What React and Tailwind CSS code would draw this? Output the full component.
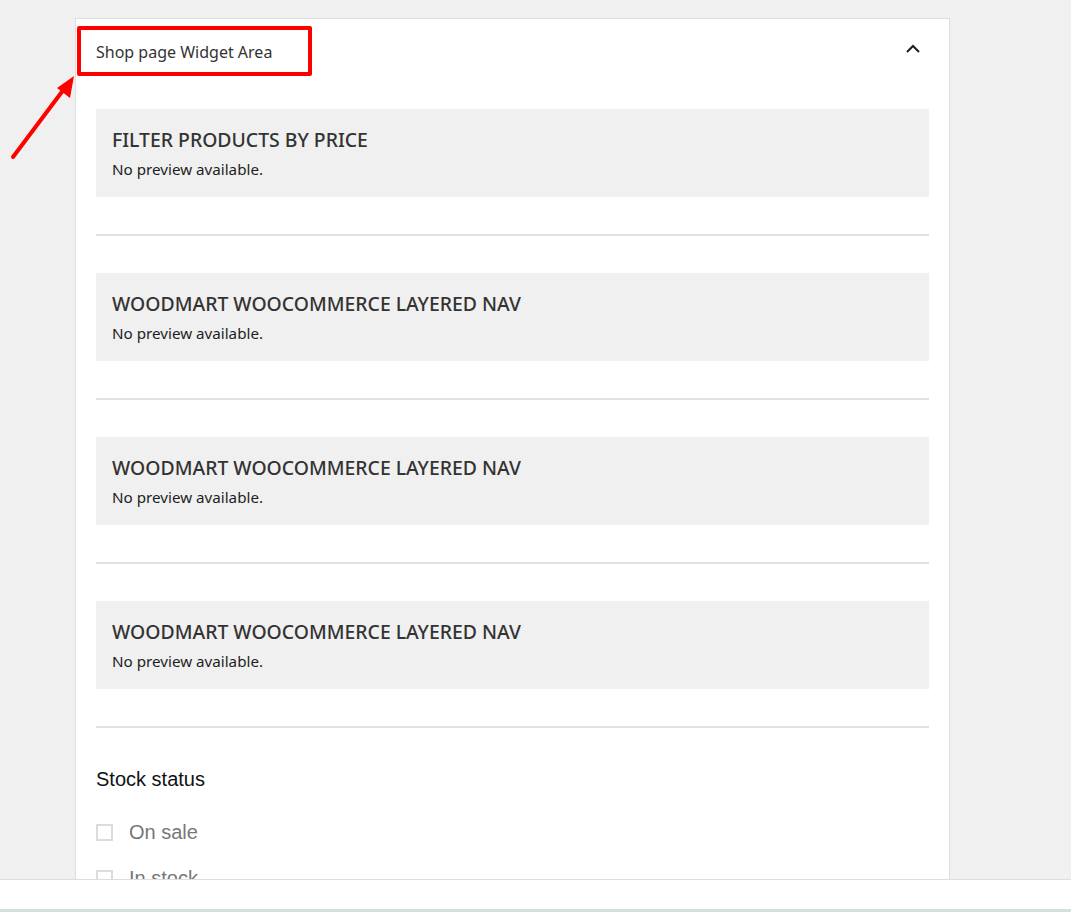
import React from 'react';

const widgets = [
  'FILTER PRODUCTS BY PRICE',
  'WOODMART WOOCOMMERCE LAYERED NAV',
  'WOODMART WOOCOMMERCE LAYERED NAV',
  'WOODMART WOOCOMMERCE LAYERED NAV',
];

const WidgetPreview = ({ title }) => (
  <div>
    <div className="h-[88px] bg-[#f0f0f0] px-4 pt-[17px]">
      <h3 className="text-[19.4px] leading-[27px] text-[#333] font-medium">{title}</h3>
      <p className="mt-[6px] text-[15.2px] leading-5 text-[#1e1e1e]">No preview available.</p>
    </div>
    <div className="h-[37px]" />
    <div className="h-[2px] bg-[#e2e2e2]" />
    <div className="h-[37px]" />
  </div>
);

const Check = ({ label }) => (
  <label className="flex items-center gap-4 h-[46px]">
    <span className="w-[17px] h-[17px] border-2 border-[#dcdcdc] bg-white" />
    <span className="text-[20px] text-[#777]" style={{ fontFamily: '"Liberation Sans", Arial, sans-serif' }}>{label}</span>
  </label>
);

export default function App() {
  return (
    <div className="relative h-[912px] overflow-hidden bg-[#f0f0f0]" style={{ fontFamily: '"Noto Sans", "Open Sans", sans-serif' }}>
      <div className="ml-[75px] mt-[18px] w-[875px] h-[900px] bg-white border border-[#dddddd]">
        <div className="relative flex items-center justify-between h-[90px] px-5">
          <span className="text-[16px] text-[#333] -mt-[24px]">Shop page Widget Area</span>
          <svg width="16" height="10" viewBox="0 0 16 10" className="mr-[8px] -mt-[30px]">
            <path d="M2 8 L8 2 L14 8" fill="none" stroke="#1e1e1e" strokeWidth="2" />
          </svg>
          <div className="absolute left-[1px] top-[7px] w-[235px] h-[50px] border-[4px] border-[#ff0000] rounded-[2px]" />
        </div>
        <div className="px-5">
          {widgets.map((w, i) => (
            <WidgetPreview key={i} title={w} />
          ))}
          <div style={{ fontFamily: '"Liberation Sans", Arial, sans-serif' }}>
            <h4 className="text-[20px] leading-[28px] text-[#111]">Stock status</h4>
            <div className="mt-[16px]">
              <Check label="On sale" />
              <Check label="In stock" />
            </div>
          </div>
        </div>
      </div>

      <div className="absolute left-0 right-0 top-[879px] h-[30px] bg-white border-t border-[#dedede]" />
      <div className="absolute left-0 right-0 top-[909px] h-[3px] bg-[#d5dfe0]" />

      <svg className="absolute left-0 top-[70px]" width="80" height="95" viewBox="0 70 80 95">
        <line x1="13" y1="157" x2="64" y2="89" stroke="#ff0000" strokeWidth="4" strokeLinecap="round" />
        <polygon points="74,76 70,98 57,88" fill="#ff0000" />
      </svg>
    </div>
  );
}
